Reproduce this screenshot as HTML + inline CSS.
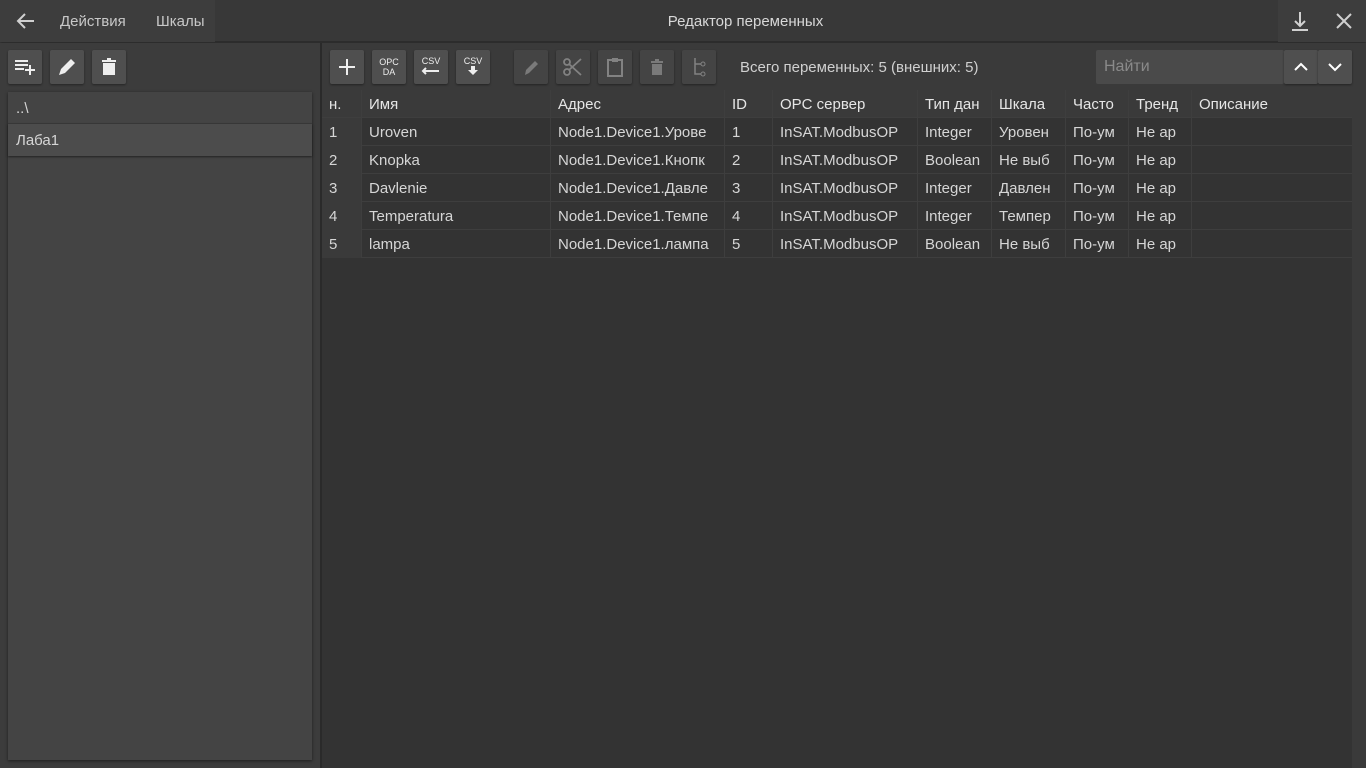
<!DOCTYPE html>
<html><head><meta charset="utf-8">
<style>
*{box-sizing:border-box;margin:0;padding:0}
body{width:1366px;height:768px;overflow:hidden;background:#3a3a3a;font-family:"Liberation Sans","DejaVu Sans",sans-serif;color:#d6d6d6;font-size:15px;position:relative}
.abs{position:absolute}
.top{left:0;top:0;width:1366px;height:42px;background:#383838;border-bottom:1px solid #2c2c2c;box-shadow:0 1px 3px rgba(0,0,0,.4)}
.menu{left:0;top:0;width:215px;height:42px;background:#3d3d3d}
.right{left:1278px;top:0;width:88px;height:42px;background:#3d3d3d}
.btn{position:absolute;width:34px;height:34px;background:#4f4f4f;border-radius:2px;box-shadow:0 1px 2px rgba(0,0,0,.4)}
.btn.dis{background:#444}
.btn svg{position:absolute;left:0;top:0}
.lp{left:0;top:43px;width:320px;height:725px;background:#3c3c3c}
.div{left:320px;top:43px;width:2px;height:725px;background:#2a2a2a}
.rp{left:322px;top:43px;width:1044px;height:725px;background:#3a3a3a}
.list{left:8px;top:92px;width:304px;height:668px;background:#444;box-shadow:0 1px 3px rgba(0,0,0,.5)}
.tbl{left:322px;top:90px;width:1030px;height:678px;background:#333}
.row{position:absolute;left:0;width:1030px;height:28px;border-bottom:1px solid #3e3e3e}
.c{position:absolute;top:0;height:28px;line-height:29px;padding-left:7px;white-space:nowrap;overflow:hidden;border-right:1px solid #3e3e3e}
.hd{background:#3a3a3a;color:#e6e6e6}
</style></head><body>
<div class="abs top"></div>
<div class="abs menu"></div>
<div class="abs right"></div>
<svg class="abs" style="left:14px;top:10px" width="24" height="22"><path d="M20 11H5M11 4L4 11l7 7" stroke="#d0d0d0" stroke-width="2" fill="none"/></svg>
<div class="abs" style="left:60px;top:13px;color:#c8c8c8">Действия</div>
<div class="abs" style="left:156px;top:13px;color:#c8c8c8">Шкалы</div>
<div class="abs" style="left:0;top:13px;width:1491px;text-align:center;color:#d8d8d8">Редактор переменных</div>
<svg class="abs" style="left:1290px;top:10px" width="20" height="22"><path d="M10 2v14M5 11l5 5 5-5M2 20h16" stroke="#d0d0d0" stroke-width="2" fill="none"/></svg>
<svg class="abs" style="left:1335px;top:12px" width="18" height="18"><path d="M2 2l14 14M16 2L2 16" stroke="#d0d0d0" stroke-width="2"/></svg>

<div class="abs lp"></div>
<div class="abs div"></div>
<div class="abs rp"></div>

<div class="btn" style="left:8px;top:50px"><svg width="34" height="34"><path d="M7 11h13M7 15h13M7 19h9M17 20h10M22 15v10" stroke="#eee" stroke-width="2"/></svg></div>
<div class="btn" style="left:50px;top:50px"><svg width="34" height="34"><path d="M9 25l2-6 10-10 4 4-10 10z" fill="#eee"/></svg></div>
<div class="btn" style="left:92px;top:50px"><svg width="34" height="34"><path d="M10 10h14v2H10zM15 8h4v2h-4zM11 13h12v12H11z" fill="#eee"/></svg></div>

<div class="abs list"></div>
<div class="abs" style="left:8px;top:92px;width:304px;height:32px;line-height:33px;padding-left:8px;background:#444;border-bottom:1px solid #3a3a3a">..\</div>
<div class="abs" style="left:8px;top:124px;width:304px;height:32px;line-height:33px;padding-left:8px;background:#4c4c4c;box-shadow:0 1px 2px rgba(0,0,0,.5)">Лаба1</div>

<div class="btn" style="left:330px;top:50px"><svg width="34" height="34"><path d="M17 9v16M9 17h16" stroke="#eee" stroke-width="2"/></svg></div>
<div class="btn" style="left:372px;top:50px"><svg width="34" height="34"><text x="17" y="15" font-size="9" fill="#eee" text-anchor="middle" font-family="Liberation Sans">OPC</text><text x="17" y="25" font-size="9" fill="#eee" text-anchor="middle" font-family="Liberation Sans">DA</text></svg></div>
<div class="btn" style="left:414px;top:50px"><svg width="34" height="34"><text x="17" y="14" font-size="9" fill="#eee" text-anchor="middle" font-family="Liberation Sans">CSV</text><path d="M9 21h16M12 18l-3 3 3 3" stroke="#eee" stroke-width="2" fill="none"/></svg></div>
<div class="btn" style="left:456px;top:50px"><svg width="34" height="34"><text x="17" y="14" font-size="9" fill="#eee" text-anchor="middle" font-family="Liberation Sans">CSV</text><path d="M15 16h4v4h3l-5 5-5-5h3z" fill="#eee"/></svg></div>
<div class="btn dis" style="left:514px;top:50px"><svg width="34" height="34"><path d="M11 25l1-5 9-9 3 3-9 9z" fill="#7a7a7a"/></svg></div>
<div class="btn dis" style="left:556px;top:50px"><svg width="34" height="34"><circle cx="11" cy="22" r="3" stroke="#828282" stroke-width="1.8" fill="none"/><circle cx="11" cy="12" r="3" stroke="#828282" stroke-width="1.8" fill="none"/><path d="M13 14l12 11M13 20L25 9" stroke="#828282" stroke-width="1.8"/></svg></div>
<div class="btn dis" style="left:598px;top:50px"><svg width="34" height="34"><rect x="10" y="10" width="14" height="16" stroke="#828282" stroke-width="2" fill="none"/><rect x="14" y="8" width="6" height="4" fill="#828282"/></svg></div>
<div class="btn dis" style="left:640px;top:50px"><svg width="34" height="34"><path d="M11 11h12v2H11zM15 9h4v2h-4zM12 14h10v11H12z" fill="#7a7a7a"/></svg></div>
<div class="btn dis" style="left:682px;top:50px"><svg width="34" height="34"><path d="M13 8v16h6M13 14h6" stroke="#828282" stroke-width="1.5" fill="none"/><circle cx="21" cy="14" r="2" stroke="#828282" fill="none"/><circle cx="21" cy="24" r="2" stroke="#828282" fill="none"/></svg></div>
<div class="abs" style="left:740px;top:59px;color:#d0d0d0">Всего переменных: 5 (внешних: 5)</div>
<div class="abs" style="left:1096px;top:50px;width:188px;height:34px;background:#4a4a4a;border-radius:2px;line-height:34px;padding-left:8px;color:#8a8a8a;font-size:16px">Найти</div>
<div class="btn" style="left:1284px;top:50px"><svg width="34" height="34"><path d="M11 20l6-6 6 6" stroke="#fff" stroke-width="2" fill="none"/></svg></div>
<div class="btn" style="left:1318px;top:50px"><svg width="34" height="34"><path d="M11 14l6 6 6-6" stroke="#fff" stroke-width="2" fill="none"/></svg></div>

<div class="abs tbl">
<div class="row hd" style="top:0">
<div class="c" style="left:0;width:40px">н.</div><div class="c" style="left:40px;width:189px">Имя</div><div class="c" style="left:229px;width:174px">Адрес</div><div class="c" style="left:403px;width:48px">ID</div><div class="c" style="left:451px;width:145px">OPC сервер</div><div class="c" style="left:596px;width:74px">Тип дан</div><div class="c" style="left:670px;width:74px">Шкала</div><div class="c" style="left:744px;width:63px">Часто</div><div class="c" style="left:807px;width:63px">Тренд</div><div class="c" style="left:870px;width:160px;border-right:0">Описание</div>
</div>
<div class="row" style="top:28px"><div class="c" style="left:0;width:40px;background:#3a3a3a">1</div><div class="c" style="left:40px;width:189px">Uroven</div><div class="c" style="left:229px;width:174px">Node1.Device1.Урове</div><div class="c" style="left:403px;width:48px">1</div><div class="c" style="left:451px;width:145px">InSAT.ModbusOP</div><div class="c" style="left:596px;width:74px">Integer</div><div class="c" style="left:670px;width:74px">Уровен</div><div class="c" style="left:744px;width:63px">По-ум</div><div class="c" style="left:807px;width:63px">Не ар</div></div>
<div class="row" style="top:56px"><div class="c" style="left:0;width:40px;background:#3a3a3a">2</div><div class="c" style="left:40px;width:189px">Knopka</div><div class="c" style="left:229px;width:174px">Node1.Device1.Кнопк</div><div class="c" style="left:403px;width:48px">2</div><div class="c" style="left:451px;width:145px">InSAT.ModbusOP</div><div class="c" style="left:596px;width:74px">Boolean</div><div class="c" style="left:670px;width:74px">Не выб</div><div class="c" style="left:744px;width:63px">По-ум</div><div class="c" style="left:807px;width:63px">Не ар</div></div>
<div class="row" style="top:84px"><div class="c" style="left:0;width:40px;background:#3a3a3a">3</div><div class="c" style="left:40px;width:189px">Davlenie</div><div class="c" style="left:229px;width:174px">Node1.Device1.Давле</div><div class="c" style="left:403px;width:48px">3</div><div class="c" style="left:451px;width:145px">InSAT.ModbusOP</div><div class="c" style="left:596px;width:74px">Integer</div><div class="c" style="left:670px;width:74px">Давлен</div><div class="c" style="left:744px;width:63px">По-ум</div><div class="c" style="left:807px;width:63px">Не ар</div></div>
<div class="row" style="top:112px"><div class="c" style="left:0;width:40px;background:#3a3a3a">4</div><div class="c" style="left:40px;width:189px">Temperatura</div><div class="c" style="left:229px;width:174px">Node1.Device1.Темпе</div><div class="c" style="left:403px;width:48px">4</div><div class="c" style="left:451px;width:145px">InSAT.ModbusOP</div><div class="c" style="left:596px;width:74px">Integer</div><div class="c" style="left:670px;width:74px">Темпер</div><div class="c" style="left:744px;width:63px">По-ум</div><div class="c" style="left:807px;width:63px">Не ар</div></div>
<div class="row" style="top:140px"><div class="c" style="left:0;width:40px;background:#3a3a3a">5</div><div class="c" style="left:40px;width:189px">lampa</div><div class="c" style="left:229px;width:174px">Node1.Device1.лампа</div><div class="c" style="left:403px;width:48px">5</div><div class="c" style="left:451px;width:145px">InSAT.ModbusOP</div><div class="c" style="left:596px;width:74px">Boolean</div><div class="c" style="left:670px;width:74px">Не выб</div><div class="c" style="left:744px;width:63px">По-ум</div><div class="c" style="left:807px;width:63px">Не ар</div></div>
</div>
</body></html>
